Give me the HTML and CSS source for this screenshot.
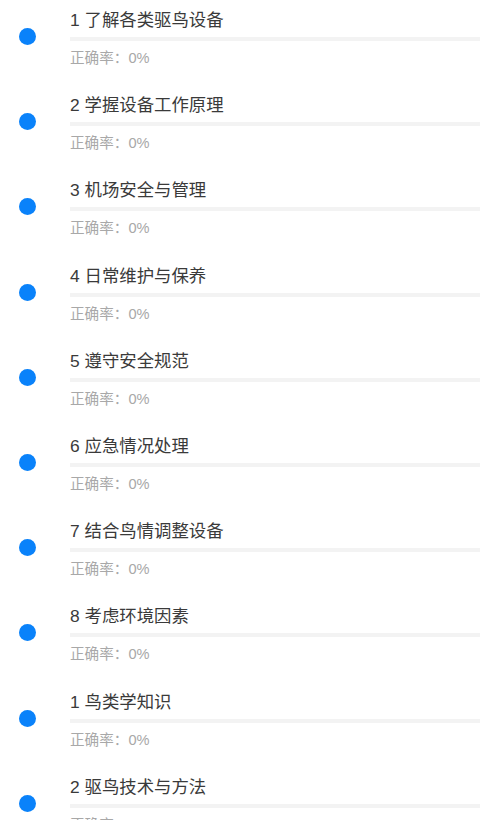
FILE: index.html
```html
<!DOCTYPE html>
<html lang="zh-CN">
<head>
<meta charset="utf-8">
<title>章节列表</title>
<link rel="stylesheet" href="styles.css">
</head>
<body>
<div class="list">
  <div class="row"><div class="mark"><span class="dot"></span></div><div class="info"><div class="title">1 了解各类驱鸟设备</div><div class="bar"></div><div class="rate">正确率：0%</div></div></div>
  <div class="row"><div class="mark"><span class="dot"></span></div><div class="info"><div class="title">2 学握设备工作原理</div><div class="bar"></div><div class="rate">正确率：0%</div></div></div>
  <div class="row"><div class="mark"><span class="dot"></span></div><div class="info"><div class="title">3 机场安全与管理</div><div class="bar"></div><div class="rate">正确率：0%</div></div></div>
  <div class="row"><div class="mark"><span class="dot"></span></div><div class="info"><div class="title">4 日常维护与保养</div><div class="bar"></div><div class="rate">正确率：0%</div></div></div>
  <div class="row"><div class="mark"><span class="dot"></span></div><div class="info"><div class="title">5 遵守安全规范</div><div class="bar"></div><div class="rate">正确率：0%</div></div></div>
  <div class="row"><div class="mark"><span class="dot"></span></div><div class="info"><div class="title">6 应急情况处理</div><div class="bar"></div><div class="rate">正确率：0%</div></div></div>
  <div class="row"><div class="mark"><span class="dot"></span></div><div class="info"><div class="title">7 结合鸟情调整设备</div><div class="bar"></div><div class="rate">正确率：0%</div></div></div>
  <div class="row"><div class="mark"><span class="dot"></span></div><div class="info"><div class="title">8 考虑环境因素</div><div class="bar"></div><div class="rate">正确率：0%</div></div></div>
  <div class="row"><div class="mark"><span class="dot"></span></div><div class="info"><div class="title">1 鸟类学知识</div><div class="bar"></div><div class="rate">正确率：0%</div></div></div>
  <div class="row"><div class="mark"><span class="dot"></span></div><div class="info"><div class="title">2 驱鸟技术与方法</div><div class="bar"></div><div class="rate">正确率：0%</div></div></div>
</div>
</body>
</html>
```
FILE: styles.css
```css
html, body {
  margin: 0;
  padding: 0;
  background: #ffffff;
  font-family: "Liberation Sans", "Noto Sans CJK SC", sans-serif;
  overflow: hidden;
}
.list {
  display: flex;
  flex-direction: column;
}
.row {
  display: flex;
  align-items: flex-start;
  height: 85.2px;
  box-sizing: border-box;
  padding-top: 8px;
}
.mark {
  width: 70px;
  flex: none;
  padding-top: 20px;
  padding-left: 19px;
  box-sizing: border-box;
}
.dot {
  display: block;
  width: 17px;
  height: 17px;
  border-radius: 50%;
  background: #0a82fa;
}
.info {
  flex: 1;
  display: flex;
  flex-direction: column;
}
.title {
  font-size: 17.4px;
  line-height: 24px;
  color: #3a3a3a;
}
.bar {
  margin-top: 5px;
  height: 4px;
  background: #f3f3f3;
}
.rate {
  margin-top: 7px;
  font-size: 14.6px;
  line-height: 20px;
  color: #a8a8a8;
}
```
